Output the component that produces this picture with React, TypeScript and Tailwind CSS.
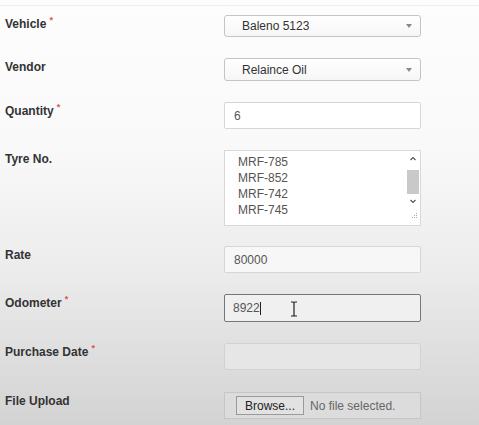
import React from 'react';

function Req() {
  return <span className="ml-[3px] relative -top-[5px] text-[9px] text-[#d9534f]">*</span>;
}

function Label({ text, required }: { text: string; required?: boolean }) {
  return (
    <div className="w-[224px] shrink-0 pl-[5px] pt-[1px] text-[12px] leading-[16px] font-bold text-[#333]">
      {text}
      {required && <Req />}
    </div>
  );
}

function Select({ value, h }: { value: string; h: string }) {
  return (
    <div
      className={`w-[197px] ${h} flex items-center justify-between rounded-[3px] border border-[#c4c4c4] bg-[linear-gradient(to_bottom,#ffffff,#f6f6f6)] pl-[17px] pr-[8px] text-[12px] text-[#333]`}
    >
      <span>{value}</span>
      <svg width="6" height="4" viewBox="0 0 6 4">
        <path d="M0 0 L6 0 L3 4 Z" fill="#8a8a8a" />
      </svg>
    </div>
  );
}

function TextBox({ value, bg = 'bg-white', children }: { value?: string; bg?: string; children?: React.ReactNode }) {
  return (
    <div className={`w-[197px] h-[27px] flex items-center rounded-[2px] border border-[#d6d6d6] ${bg} pl-[9px] text-[12px] text-[#555]`}>
      {value}
      {children}
    </div>
  );
}

function TyreList() {
  const items = ['MRF-785', 'MRF-852', 'MRF-742', 'MRF-745'];
  return (
    <div className="w-[197px] h-[76px] flex border border-[#d8d8d8] bg-white">
      <div className="flex-1 pl-[13px] pt-[3px] text-[12px] leading-[16px] text-[#555]">
        {items.map((t) => (
          <div key={t}>{t}</div>
        ))}
      </div>
      <div className="w-[14px] flex flex-col items-center">
        <svg width="14" height="14" viewBox="0 0 14 14" className="mt-[1px]">
          <path d="M4.5 8 L7 5.5 L9.5 8" fill="none" stroke="#555" strokeWidth="1.2" />
        </svg>
        <div className="w-[12px] h-[24px] bg-[#c9c9c9] mt-[4px]" />
        <svg width="14" height="14" viewBox="0 0 14 14" className="mt-[1px]">
          <path d="M4.5 5 L7 7.5 L9.5 5" fill="none" stroke="#555" strokeWidth="1.2" />
        </svg>
        <svg width="8" height="8" viewBox="0 0 8 8" className="self-end mr-[2px] mt-[2px]">
          <rect x="6" y="2" width="1" height="1" fill="#aaa" />
          <rect x="6" y="4" width="1" height="1" fill="#aaa" />
          <rect x="4" y="4" width="1" height="1" fill="#aaa" />
          <rect x="6" y="6" width="1" height="1" fill="#aaa" />
          <rect x="4" y="6" width="1" height="1" fill="#aaa" />
          <rect x="2" y="6" width="1" height="1" fill="#aaa" />
        </svg>
      </div>
    </div>
  );
}

export default function App() {
  return (
    <div
      className="w-full h-[425px] overflow-hidden bg-[linear-gradient(to_bottom,#fdfdfd_0%,#f9f9f9_35%,#ebebeb_65%,#d3d3d3_100%)]"
      style={{ fontFamily: '"Liberation Sans", Arial, sans-serif' }}
    >
      <div className="mt-[5px] h-px bg-[#efefef]" />
      <div className="flex flex-col gap-[21px] pt-[9px]">
        <div className="flex">
          <Label text="Vehicle" required />
          <Select value="Baleno 5123" h="h-[22px]" />
        </div>
        <div className="flex">
          <Label text="Vendor" />
          <Select value="Relaince Oil" h="h-[23px]" />
        </div>
        <div className="flex">
          <Label text="Quantity" required />
          <TextBox value="6" />
        </div>
        <div className="flex">
          <Label text="Tyre No." />
          <TyreList />
        </div>
        <div className="flex -mt-[1px]">
          <Label text="Rate" />
          <TextBox value="80000" bg="bg-[#f7f7f7]" />
        </div>
        <div className="flex">
          <Label text="Odometer" required />
          <div className="relative w-[197px] h-[28px] flex items-center rounded-[2px] border-[1.5px] border-[#777] bg-[#f0f0f0] pl-[8px] text-[12px] text-[#555]">
            8922
            <span className="w-px h-[13px] bg-[#222]" />
            <svg width="8" height="16" viewBox="0 0 8 16" className="absolute left-[65px] top-[6px]">
              <path d="M1 1 H3 Q4 1 4 2 V14 Q4 15 3 15 H1 M7 1 H5 Q4 1 4 2 M4 14 Q4 15 5 15 H7" fill="none" stroke="#222" strokeWidth="1.2" />
            </svg>
          </div>
        </div>
        <div className="flex">
          <Label text="Purchase Date" required />
          <div className="w-[197px] h-[27px] rounded-[3px] border border-[#d2d2d2] bg-[#e6e6e6]" />
        </div>
        <div className="flex mt-[1px]">
          <Label text="File Upload" />
          <div className="w-[197px] h-[27px] flex items-center border border-[#c6c6c6] bg-[#dcdcdc] pl-[11px] text-[12px]">
            <div className="h-[19px] flex items-center border border-[#9a9a9a] bg-[#e2e2e2] px-[8px] text-[#222]">Browse...</div>
            <span className="ml-[6px] text-[#666]">No file selected.</span>
          </div>
        </div>
      </div>
    </div>
  );
}
